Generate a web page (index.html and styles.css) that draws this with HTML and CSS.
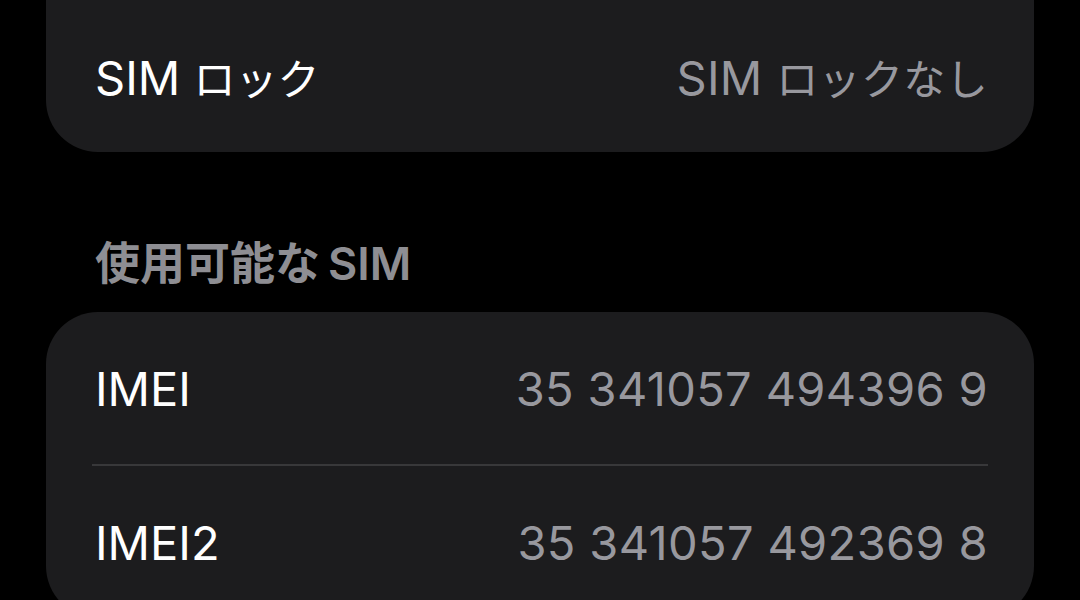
FILE: index.html
```html
<!DOCTYPE html>
<html>
<head>
    <meta charset="UTF-8">
    <meta name="viewport" content="width=device-width, initial-scale=1.0">
    <title>情報</title>
    <link rel="stylesheet" href="styles.css">
</head>
<body>
    <div class="page">
        <div class="group cut">
            <div class="row">
                <span class="label">SIM <span class="kana">ロック</span></span>
                <span class="value">SIM <span class="kana">ロックなし</span></span>
            </div>
        </div>

        <div class="sectionTitle">使用可能な<span class="latin">SIM</span></div>

        <div class="group">
            <div class="row">
                <span class="label">IMEI</span>
                <span class="value">35 341057 494396 9</span>
            </div>
            <div class="row">
                <span class="label">IMEI2</span>
                <span class="value">35 341057 492369 8</span>
            </div>
        </div>
    </div>
</body>
</html>
```

FILE: styles.css
```css
body {
    margin: 0;
    background-color: #000;
    font-family: "Inter", "Noto Sans CJK JP", sans-serif;
    overflow: hidden;
}

.page {
    padding: 0 46px;
}

.group {
    background-color: #1c1c1e;
    border-radius: 52px;
    padding: 0 46px 0 49px;
}

.group.cut {
    border-top-left-radius: 0;
    border-top-right-radius: 0;
}

.row {
    display: flex;
    justify-content: space-between;
    align-items: center;
    height: 152px;
    font-size: 47px;
}

.row + .row {
    border-top: 2px solid #38383a;
    margin-left: -3px;
    padding-left: 3px;
}

.label {
    color: #ffffff;
}

.value {
    color: #98989e;
    letter-spacing: 0.35px;
}

.kana {
    font-size: 42px;
}

.sectionTitle {
    margin: 84px 0 20px;
    padding-left: 49px;
    height: 56px;
    line-height: 56px;
    font-size: 45px;
    font-weight: bold;
    color: #8e8e93;
}

.sectionTitle .latin {
    margin-left: 8px;
    font-weight: 600;
}
```
